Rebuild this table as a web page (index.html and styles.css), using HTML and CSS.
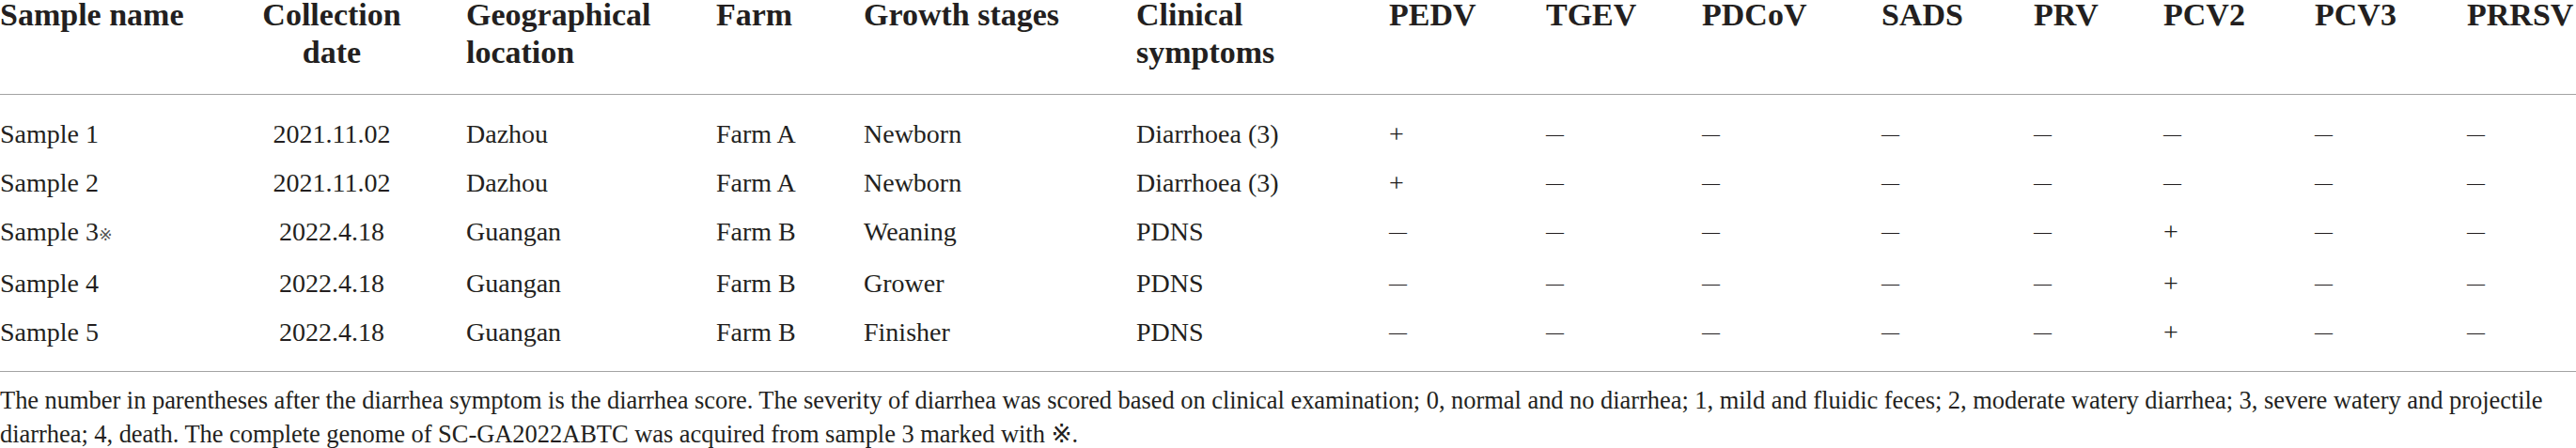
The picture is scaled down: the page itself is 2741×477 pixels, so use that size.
FILE: index.html
```html
<!DOCTYPE html>
<html lang="en">
  <head>
    <meta charset="UTF-8" />
    <meta name="viewport" content="width=device-width, initial-scale=1.0" />
    <title>Sample information</title>
    <link rel="stylesheet" href="styles.css">
  </head>
  <body>
    <table class="samples">
      <colgroup>
        <col style="width: 210px" />
        <col style="width: 286px" />
        <col style="width: 266px" />
        <col style="width: 157px" />
        <col style="width: 290px" />
        <col style="width: 269px" />
        <col style="width: 167px" />
        <col style="width: 166px" />
        <col style="width: 191px" />
        <col style="width: 162px" />
        <col style="width: 138px" />
        <col style="width: 161px" />
        <col style="width: 162px" />
        <col style="width: 116px" />
      </colgroup>
      <thead>
        <tr>
          <th>Sample name</th>
          <th class="center">Collection<br />date</th>
          <th>Geographical<br />location</th>
          <th>Farm</th>
          <th>Growth stages</th>
          <th>Clinical<br />symptoms</th>
          <th>PEDV</th>
          <th>TGEV</th>
          <th>PDCoV</th>
          <th>SADS</th>
          <th>PRV</th>
          <th>PCV2</th>
          <th>PCV3</th>
          <th>PRRSV</th>
        </tr>
      </thead>
      <tbody>
        <tr>
          <td>Sample 1</td>
          <td class="center">2021.11.02</td>
          <td>Dazhou</td>
          <td>Farm A</td>
          <td>Newborn</td>
          <td>Diarrhoea (3)</td>
          <td class="pos">+</td>
          <td class="neg">—</td>
          <td class="neg">—</td>
          <td class="neg">—</td>
          <td class="neg">—</td>
          <td class="neg">—</td>
          <td class="neg">—</td>
          <td class="neg">—</td>
        </tr>
        <tr>
          <td>Sample 2</td>
          <td class="center">2021.11.02</td>
          <td>Dazhou</td>
          <td>Farm A</td>
          <td>Newborn</td>
          <td>Diarrhoea (3)</td>
          <td class="pos">+</td>
          <td class="neg">—</td>
          <td class="neg">—</td>
          <td class="neg">—</td>
          <td class="neg">—</td>
          <td class="neg">—</td>
          <td class="neg">—</td>
          <td class="neg">—</td>
        </tr>
        <tr>
          <td>Sample 3<span class="mark">※</span></td>
          <td class="center">2022.4.18</td>
          <td>Guangan</td>
          <td>Farm B</td>
          <td>Weaning</td>
          <td>PDNS</td>
          <td class="neg">—</td>
          <td class="neg">—</td>
          <td class="neg">—</td>
          <td class="neg">—</td>
          <td class="neg">—</td>
          <td class="pos">+</td>
          <td class="neg">—</td>
          <td class="neg">—</td>
        </tr>
        <tr>
          <td>Sample 4</td>
          <td class="center">2022.4.18</td>
          <td>Guangan</td>
          <td>Farm B</td>
          <td>Grower</td>
          <td>PDNS</td>
          <td class="neg">—</td>
          <td class="neg">—</td>
          <td class="neg">—</td>
          <td class="neg">—</td>
          <td class="neg">—</td>
          <td class="pos">+</td>
          <td class="neg">—</td>
          <td class="neg">—</td>
        </tr>
        <tr>
          <td>Sample 5</td>
          <td class="center">2022.4.18</td>
          <td>Guangan</td>
          <td>Farm B</td>
          <td>Finisher</td>
          <td>PDNS</td>
          <td class="neg">—</td>
          <td class="neg">—</td>
          <td class="neg">—</td>
          <td class="neg">—</td>
          <td class="neg">—</td>
          <td class="pos">+</td>
          <td class="neg">—</td>
          <td class="neg">—</td>
        </tr>
      </tbody>
    </table>

    <p class="note">
      The number in parentheses after the diarrhea symptom is the diarrhea score. The severity of diarrhea was scored based on clinical examination; 0, normal and no diarrhea; 1, mild and fluidic feces; 2, moderate watery diarrhea; 3, severe watery and projectile diarrhea; 4, death. The complete genome of SC-GA2022ABTC was acquired from sample 3 marked with ※.
    </p>
  </body>
</html>
```

FILE: styles.css
```css
body {
  margin: 0;
  background: #ffffff;
  color: #231f20;
  font-family: "Liberation Serif", "Times New Roman", serif;
}

.samples {
  width: 2741px;
  table-layout: fixed;
  border-spacing: 0;
  margin-top: -4px;
}

.samples th {
  font-size: 34px;
  font-weight: bold;
  line-height: 40px;
  text-align: left;
  vertical-align: top;
  white-space: nowrap;
  padding: 0 0 24px 0;
  border-bottom: 1px solid #a3a3a3;
}

.samples td {
  font-size: 28px;
  line-height: 52px;
  padding: 0;
  white-space: nowrap;
  vertical-align: top;
}

/* extra room under the header line and above the closing line */
.samples tbody tr:first-child td {
  padding-top: 16px;
}

.samples tbody tr:last-child td {
  padding-bottom: 15px;
  border-bottom: 1px solid #a3a3a3;
}

.samples .center {
  text-align: center;
}

.samples td.neg {
  font-size: 19px;
}

.mark {
  font-family: "DejaVu Sans", "Noto Sans CJK SC", sans-serif;
  font-size: 0.62em;
  color: #555;
}

.note {
  margin: 12px 0 0 0;
  font-family: "Liberation Serif", "DejaVu Sans", serif;
  font-size: 26.5px;
  letter-spacing: -0.05px;
  line-height: 36px;
}
```
